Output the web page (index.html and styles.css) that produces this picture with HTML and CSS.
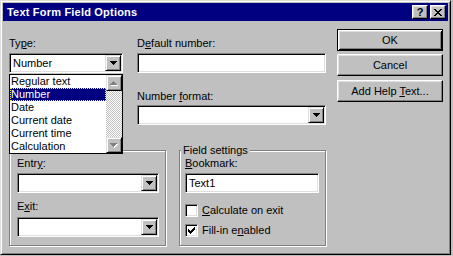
FILE: index.html
```html
<!DOCTYPE html>
<html lang="en">
<head>
    <meta charset="UTF-8">
    <title>Text Form Field Options</title>
    <link rel="stylesheet" href="styles.css">
</head>
<body>

    <div class="window">
        <div class="titlebar">
            <span class="title">Text Form Field Options</span>
            <div class="tb-buttons">
                <button class="tb-btn">?</button>
                <button class="tb-btn">
                    <svg width="8" height="7" viewBox="0 0 8 7"><path d="M0 0h2v1H0zM6 0h2v1H6zM1 1h2v1H1zM5 1h2v1H5zM2 2h4v1H2zM3 3h2v1H3zM2 4h4v1H2zM1 5h2v1H1zM5 5h2v1H5zM0 6h2v1H0zM6 6h2v1H6z" fill="#000"/></svg>
                </button>
            </div>
        </div>

        <div class="dialog-body">
            <div class="main">
                <div class="top">
                    <div class="col-type">
                        <label class="lbl">Ty<u>p</u>e:</label>
                        <div class="combo">
                            <span class="combo-value">Number</span>
                            <span class="drop-btn"><svg width="7" height="4" viewBox="0 0 7 4"><path d="M0 0h7v1H0zM1 1h5v1H1zM2 2h3v1H2zM3 3h1v1H3z" fill="#000"/></svg></span>

                            <!-- open list of the Type combo -->
                            <div class="droplist">
                                <div class="options">
                                    <div class="opt">Regular text</div>
                                    <div class="opt selected">Number</div>
                                    <div class="opt">Date</div>
                                    <div class="opt">Current date</div>
                                    <div class="opt">Current time</div>
                                    <div class="opt">Calculation</div>
                                </div>
                                <div class="scrollbar">
                                    <span class="sb-btn"><svg width="8" height="5" viewBox="0 0 8 5"><path d="M4 1h1v1H4zM3 2h3v1H3zM2 3h5v1H2zM1 4h7v1H1z" fill="#fff"/><path d="M3 0h1v1H3zM2 1h3v1H2zM1 2h5v1H1zM0 3h7v1H0z" fill="#808080"/></svg></span>
                                    <span class="sb-track"></span>
                                    <span class="sb-btn"><svg width="8" height="5" viewBox="0 0 8 5"><path d="M1 1h7v1H1zM2 2h5v1H2zM3 3h3v1H3zM4 4h1v1H4z" fill="#fff"/><path d="M0 0h7v1H0zM1 1h5v1H1zM2 2h3v1H2zM3 3h1v1H3z" fill="#808080"/></svg></span>
                                </div>
                            </div>
                        </div>
                    </div>

                    <div class="col-number">
                        <label class="lbl">D<u>e</u>fault number:</label>
                        <div class="field"></div>
                        <label class="lbl spaced">Number <u>f</u>ormat:</label>
                        <div class="combo">
                            <span class="combo-value"></span>
                            <span class="drop-btn"><svg width="7" height="4" viewBox="0 0 7 4"><path d="M0 0h7v1H0zM1 1h5v1H1zM2 2h3v1H2zM3 3h1v1H3z" fill="#000"/></svg></span>
                        </div>
                    </div>
                </div>

                <div class="groups">
                    <!-- its caption is hidden under the open list -->
                    <div class="group run">
                        <span class="legend empty"></span>
                        <label class="lbl">Entr<u>y</u>:</label>
                        <div class="combo">
                            <span class="combo-value"></span>
                            <span class="drop-btn"><svg width="7" height="4" viewBox="0 0 7 4"><path d="M0 0h7v1H0zM1 1h5v1H1zM2 2h3v1H2zM3 3h1v1H3z" fill="#000"/></svg></span>
                        </div>
                        <label class="lbl exit">E<u>x</u>it:</label>
                        <div class="combo">
                            <span class="combo-value"></span>
                            <span class="drop-btn"><svg width="7" height="4" viewBox="0 0 7 4"><path d="M0 0h7v1H0zM1 1h5v1H1zM2 2h3v1H2zM3 3h1v1H3z" fill="#000"/></svg></span>
                        </div>
                    </div>

                    <div class="group settings">
                        <span class="legend">Field settings</span>
                        <label class="lbl"><u>B</u>ookmark:</label>
                        <div class="field">Text1</div>
                        <div class="check first">
                            <span class="box"></span>
                            <span><u>C</u>alculate on exit</span>
                        </div>
                        <div class="check">
                            <span class="box"><svg width="7" height="7" viewBox="0 0 7 7"><path d="M6 0h1v1H6zM5 1h2v1H5zM0 2h1v1H0zM4 2h3v1H4zM0 3h2v1H0zM3 3h3v1H3zM0 4h5v1H0zM1 5h3v1H1zM2 6h1v1H2z" fill="#000"/></svg></span>
                            <span>Fill-in e<u>n</u>abled</span>
                        </div>
                    </div>
                </div>
            </div>

            <div class="buttons">
                <button class="btn default">OK</button>
                <button class="btn">Cancel</button>
                <button class="btn help-text">Add Help <u>T</u>ext...</button>
            </div>
        </div>
    </div>

</body>
</html>
```

FILE: styles.css
```css
body {
    margin: 0;
    background-color: #c0c0c0;
    font-family: "Liberation Sans", Arial, sans-serif;
    font-size: 11px;
    color: #000;
}
.window {
    width: 451px;
    height: 255px;
    box-sizing: border-box;
    padding: 2px;
    border: 1px solid;
    border-color: #dfdfdf #000 #000 #dfdfdf;
    box-shadow: inset 1px 1px #fff, inset -1px -1px #808080;
    background-color: #c0c0c0;
}

/* title bar */
.titlebar {
    height: 18px;
    display: flex;
    align-items: center;
    justify-content: space-between;
    padding: 0 2px 0 4px;
    background-color: #000080;
}
.title {
    color: #fff;
    font-weight: bold;
    line-height: 13px;
    letter-spacing: 0.2px;
}
.tb-buttons {
    display: flex;
    gap: 2px;
}
.tb-btn {
    width: 16px;
    height: 14px;
    box-sizing: border-box;
    padding: 0;
    display: flex;
    align-items: center;
    justify-content: center;
    font: bold 11px "Liberation Sans", Arial, sans-serif;
    background-color: #c0c0c0;
    border: 1px solid;
    border-color: #fff #000 #000 #fff;
    box-shadow: inset -1px -1px #808080, inset 1px 1px #dfdfdf;
}

/* layout */
.dialog-body {
    display: flex;
    padding-left: 6px;
}
.main {
    width: 317px;
    padding-top: 16px;
}
.top {
    display: flex;
    gap: 14px;
}
.col-type {
    width: 114px;
}
.col-number {
    width: 189px;
}
.lbl {
    display: block;
    height: 13px;
    line-height: 13px;
    margin-bottom: 3px;
}
.lbl.spaced {
    margin-top: 17px;
    margin-bottom: 2px;
}
.lbl.exit {
    margin-top: 7px;
    margin-bottom: 4px;
}

/* sunken fields */
.field, .combo {
    height: 20px;
    box-sizing: border-box;
    background-color: #fff;
    border: 1px solid;
    border-color: #808080 #fff #fff #808080;
    box-shadow: inset 1px 1px #000, inset -1px -1px #dfdfdf;
}
.field {
    padding: 2px 3px;
    line-height: 14px;
}
.combo {
    display: flex;
    padding: 1px;
    position: relative;
}
.combo-value {
    flex: 1;
    padding-left: 2px;
    line-height: 16px;
}
.drop-btn, .sb-btn {
    width: 16px;
    height: 16px;
    box-sizing: border-box;
    display: flex;
    align-items: center;
    justify-content: center;
    background-color: #c0c0c0;
    border: 1px solid;
    border-color: #dfdfdf #000 #000 #dfdfdf;
    box-shadow: inset 1px 1px #fff, inset -1px -1px #808080;
}

/* open dropdown list */
.droplist {
    position: absolute;
    left: -1px;
    top: 20px;
    z-index: 2;
    width: 114px;
    height: 80px;
    box-sizing: border-box;
    display: flex;
    border: 1px solid #000;
    background-color: #fff;
}
.options {
    flex: 1;
}
.opt {
    height: 13px;
    line-height: 13px;
    padding-left: 1px;
}
.opt.selected {
    background-color: #000080;
    color: #fff;
    outline: 1px dotted #ffff00;
    outline-offset: -1px;
}
.scrollbar {
    width: 16px;
    display: flex;
    flex-direction: column;
}
.sb-track {
    flex: 1;
    background: repeating-conic-gradient(#c0c0c0 0 25%, #fff 0 50%) 0 0 / 2px 2px;
}

/* group boxes */
.groups {
    display: flex;
    gap: 13px;
    margin-top: 25px;
}
.group {
    height: 96px;
    box-sizing: border-box;
    border: 1px solid #808080;
    box-shadow: inset 1px 1px #fff, 1px 1px #fff;
}
.group.run {
    width: 157px;
    padding: 0 6px 0 7px;
}
.group.settings {
    width: 147px;
    padding: 0 6px 0 5px;
}
.legend {
    display: block;
    width: fit-content;
    height: 13px;
    line-height: 13px;
    margin: -7px 0 0 -4px;
    padding: 0 2px;
    background-color: #c0c0c0;
}
.legend.empty {
    background-color: transparent;
}

/* checkboxes */
.check {
    display: flex;
    align-items: center;
    gap: 4px;
    height: 13px;
    line-height: 13px;
    margin-top: 7px;
}
.check.first {
    margin-top: 11px;
}
.box {
    width: 13px;
    height: 13px;
    box-sizing: border-box;
    display: flex;
    align-items: center;
    justify-content: center;
    background-color: #fff;
    border: 1px solid;
    border-color: #808080 #fff #fff #808080;
    box-shadow: inset 1px 1px #000, inset -1px -1px #dfdfdf;
}

/* push buttons */
.buttons {
    margin-left: 11px;
    padding-top: 8px;
}
.btn {
    display: block;
    width: 106px;
    height: 22px;
    box-sizing: border-box;
    padding: 0;
    margin-top: 3px;
    font: 11px "Liberation Sans", Arial, sans-serif;
    color: #000;
    background-color: #c0c0c0;
    border: 1px solid;
    border-color: #fff #000 #000 #fff;
    box-shadow: inset -1px -1px #808080, inset 1px 1px #dfdfdf;
}
.btn.default {
    margin-top: 0;
    border-color: #000;
    box-shadow: inset 1px 1px #fff, inset -1px -1px #000, inset 2px 2px #dfdfdf, inset -2px -2px #808080;
}
.btn.help-text {
    margin-top: 4px;
}
```
